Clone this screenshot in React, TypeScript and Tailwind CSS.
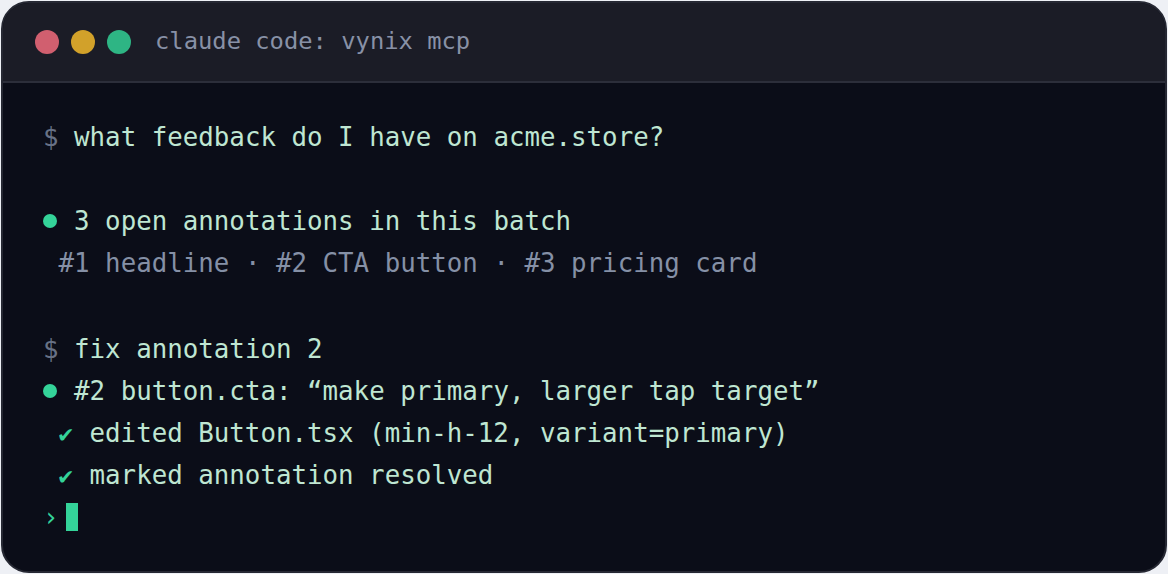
import React from "react";

const mono = { fontFamily: '"DejaVu Sans Mono", "Liberation Mono", monospace' };

type Line =
    | { kind: "cmd"; text: string }
    | { kind: "dot"; text: string }
    | { kind: "note"; text: string }
    | { kind: "check"; text: string }
    | { kind: "gap"; h: string };

const lines: Line[] = [
    { kind: "cmd", text: "what feedback do I have on acme.store?" },
    { kind: "gap", h: "h-[42px]" },
    { kind: "dot", text: "3 open annotations in this batch" },
    { kind: "note", text: "#1 headline · #2 CTA button · #3 pricing card" },
    { kind: "gap", h: "h-[44px]" },
    { kind: "cmd", text: "fix annotation 2" },
    { kind: "dot", text: "#2 button.cta: \u201cmake primary, larger tap target\u201d" },
    { kind: "check", text: "edited Button.tsx (min-h-12, variant=primary)" },
    { kind: "check", text: "marked annotation resolved" },
];

function Row({ line }: { line: Line }) {
    if (line.kind === "gap") return <div className={line.h} />;
    if (line.kind === "cmd") {
        return (
            <div className="flex h-[42px] items-center whitespace-pre">
                <span className="w-[2ch] shrink-0 text-[#677186]">$</span>
                <span className="text-[#bfe6d2]">{line.text}</span>
            </div>
        );
    }
    if (line.kind === "dot") {
        return (
            <div className="flex h-[42px] items-center whitespace-pre">
                <span className="flex w-[2ch] shrink-0 items-center">
                    <span className="h-[14px] w-[14px] rounded-full bg-[#34d399]" />
                </span>
                <span className="text-[#bfe6d2]">{line.text}</span>
            </div>
        );
    }
    if (line.kind === "note") {
        return (
            <div className="flex h-[42px] items-center whitespace-pre">
                <span className="w-[1ch] shrink-0" />
                <span className="text-[#8590a6]">{line.text}</span>
            </div>
        );
    }
    return (
        <div className="flex h-[42px] items-center whitespace-pre">
            <span className="w-[1ch] shrink-0" />
            <span className="w-[2ch] shrink-0 font-bold text-[#34d399]">
                <span className="text-[24px]">✔</span>
            </span>
            <span className="text-[#bfe6d2]">{line.text}</span>
        </div>
    );
}

export default function App() {
    return (
        <div className="h-[574px] w-[1168px] bg-[#eef0f5] p-[1px]" style={mono}>
            <div className="flex h-full flex-col overflow-hidden rounded-[28px] border-2 border-[#262833] bg-[#0b0d18]">
                {/* title bar */}
                <div className="flex h-[80px] shrink-0 items-center border-b-2 border-[#2c2e3a] bg-[#1b1c26] pl-[32px]">
                    <div className="flex gap-[12px]">
                        <span className="h-[24px] w-[24px] rounded-full bg-[#d15f6f]" />
                        <span className="h-[24px] w-[24px] rounded-full bg-[#d2a12a]" />
                        <span className="h-[24px] w-[24px] rounded-full bg-[#2eb584]" />
                    </div>
                    <span className="ml-[24px] text-[23.8px] text-[#8891a6]">claude code: vynix mcp</span>
                </div>

                {/* terminal body */}
                <div className="flex flex-col pl-[40px] pt-[33px] text-[25.8px]">
                    {lines.map((l, i) => (
                        <Row key={i} line={l} />
                    ))}
                    <div className="flex h-[42px] items-center">
                        <span className="w-[23px] shrink-0 text-[#34d399]">›</span>
                        <span className="h-[28px] w-[12px] bg-[#34d399]" />
                    </div>
                </div>
            </div>
        </div>
    );
}
